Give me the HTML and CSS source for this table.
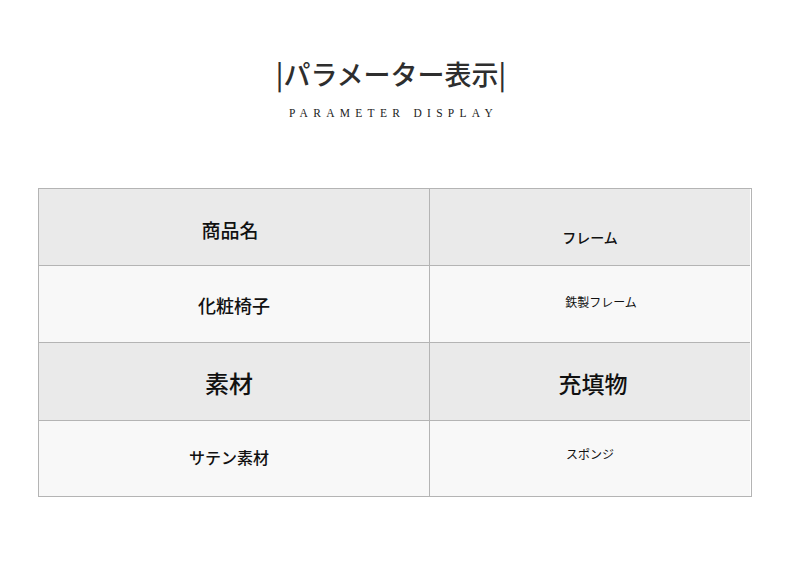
FILE: index.html
```html
<!DOCTYPE html>
<html lang="ja">
<head>
<meta charset="utf-8">
<link rel="stylesheet" href="styles.css">
</head>
<body>
<div class="page">
  <header class="heading">
    <h1 class="title">|パラメーター表示|</h1>
    <p class="subtitle">PARAMETER DISPLAY</p>
  </header>
  <div class="spec">
    <div class="cell head"><span class="t19 med cell-a">商品名</span></div>
    <div class="cell head right"><span class="t14 med cell-b">フレーム</span></div>
    <div class="cell body"><span class="t18 med cell-c">化粧椅子</span></div>
    <div class="cell body right"><span class="t12 cell-d">鉄製フレーム</span></div>
    <div class="cell head tall"><span class="t24 med cell-e">素材</span></div>
    <div class="cell head tall right"><span class="t23 med cell-f">充填物</span></div>
    <div class="cell body last"><span class="t16 med cell-g">サテン素材</span></div>
    <div class="cell body last right"><span class="t12 cell-h">スポンジ</span></div>
  </div>
</div>
</body>
</html>
```
FILE: styles.css
```css
html, body {
  margin: 0;
  padding: 0;
  background: #ffffff;
}
.page {
  width: 790px;
  height: 583px;
  font-family: "Noto Sans CJK JP", "Noto Sans", sans-serif;
  color: #111;
}
.heading {
  padding-top: 56px;
  display: flex;
  flex-direction: column;
  align-items: center;
  padding-right: 8px;
}
.title {
  margin: 0;
  font-size: 27px;
  line-height: 36px;
  font-weight: 500;
  color: #2e2e2e;
  letter-spacing: 0;
}
.subtitle {
  margin: 14px 0 0 0;
  font-family: "Liberation Serif", "DejaVu Serif", serif;
  font-size: 11.5px;
  line-height: 14px;
  letter-spacing: 5.3px;
  color: #222;
  padding-left: 5px;
}
.spec {
  margin: 68px 0 0 38px;
  width: 712px;
  border: 1px solid #b4b4b4;
  display: grid;
  grid-template-columns: 391px 320px;
}
.cell {
  height: 76px;
  display: flex;
  align-items: center;
  justify-content: center;
  border-bottom: 1px solid #b4b4b4;
  border-right: 1px solid #b4b4b4;
}
.cell.right {
  border-right: none;
}
.cell.tall {
  height: 77px;
}
.cell.last {
  border-bottom: none;
  height: 75px;
}
.head {
  background: #eaeaea;
}
.body {
  background: #f8f8f8;
}
.t12 { font-size: 12px; }
.t14 { font-size: 14px; }
.t16 { font-size: 16px; }
.t18 { font-size: 18px; }
.t19 { font-size: 19px; }
.t23 { font-size: 23px; }
.t24 { font-size: 24px; }
.med { font-weight: 500; }
.cell-a { padding: 4px 8px 0 0; }
.cell-b { padding: 20px 0 0 0; }
.cell-c { padding: 2px 0 0 0; }
.cell-d { padding: 0 0 6px 22px; }
.cell-e { padding: 2px 10px 0 0; }
.cell-f { padding: 2px 0 0 6px; }
.cell-g { padding: 0 10px 4px 0; }
.cell-h { padding: 0 0 10px 0; }
```
